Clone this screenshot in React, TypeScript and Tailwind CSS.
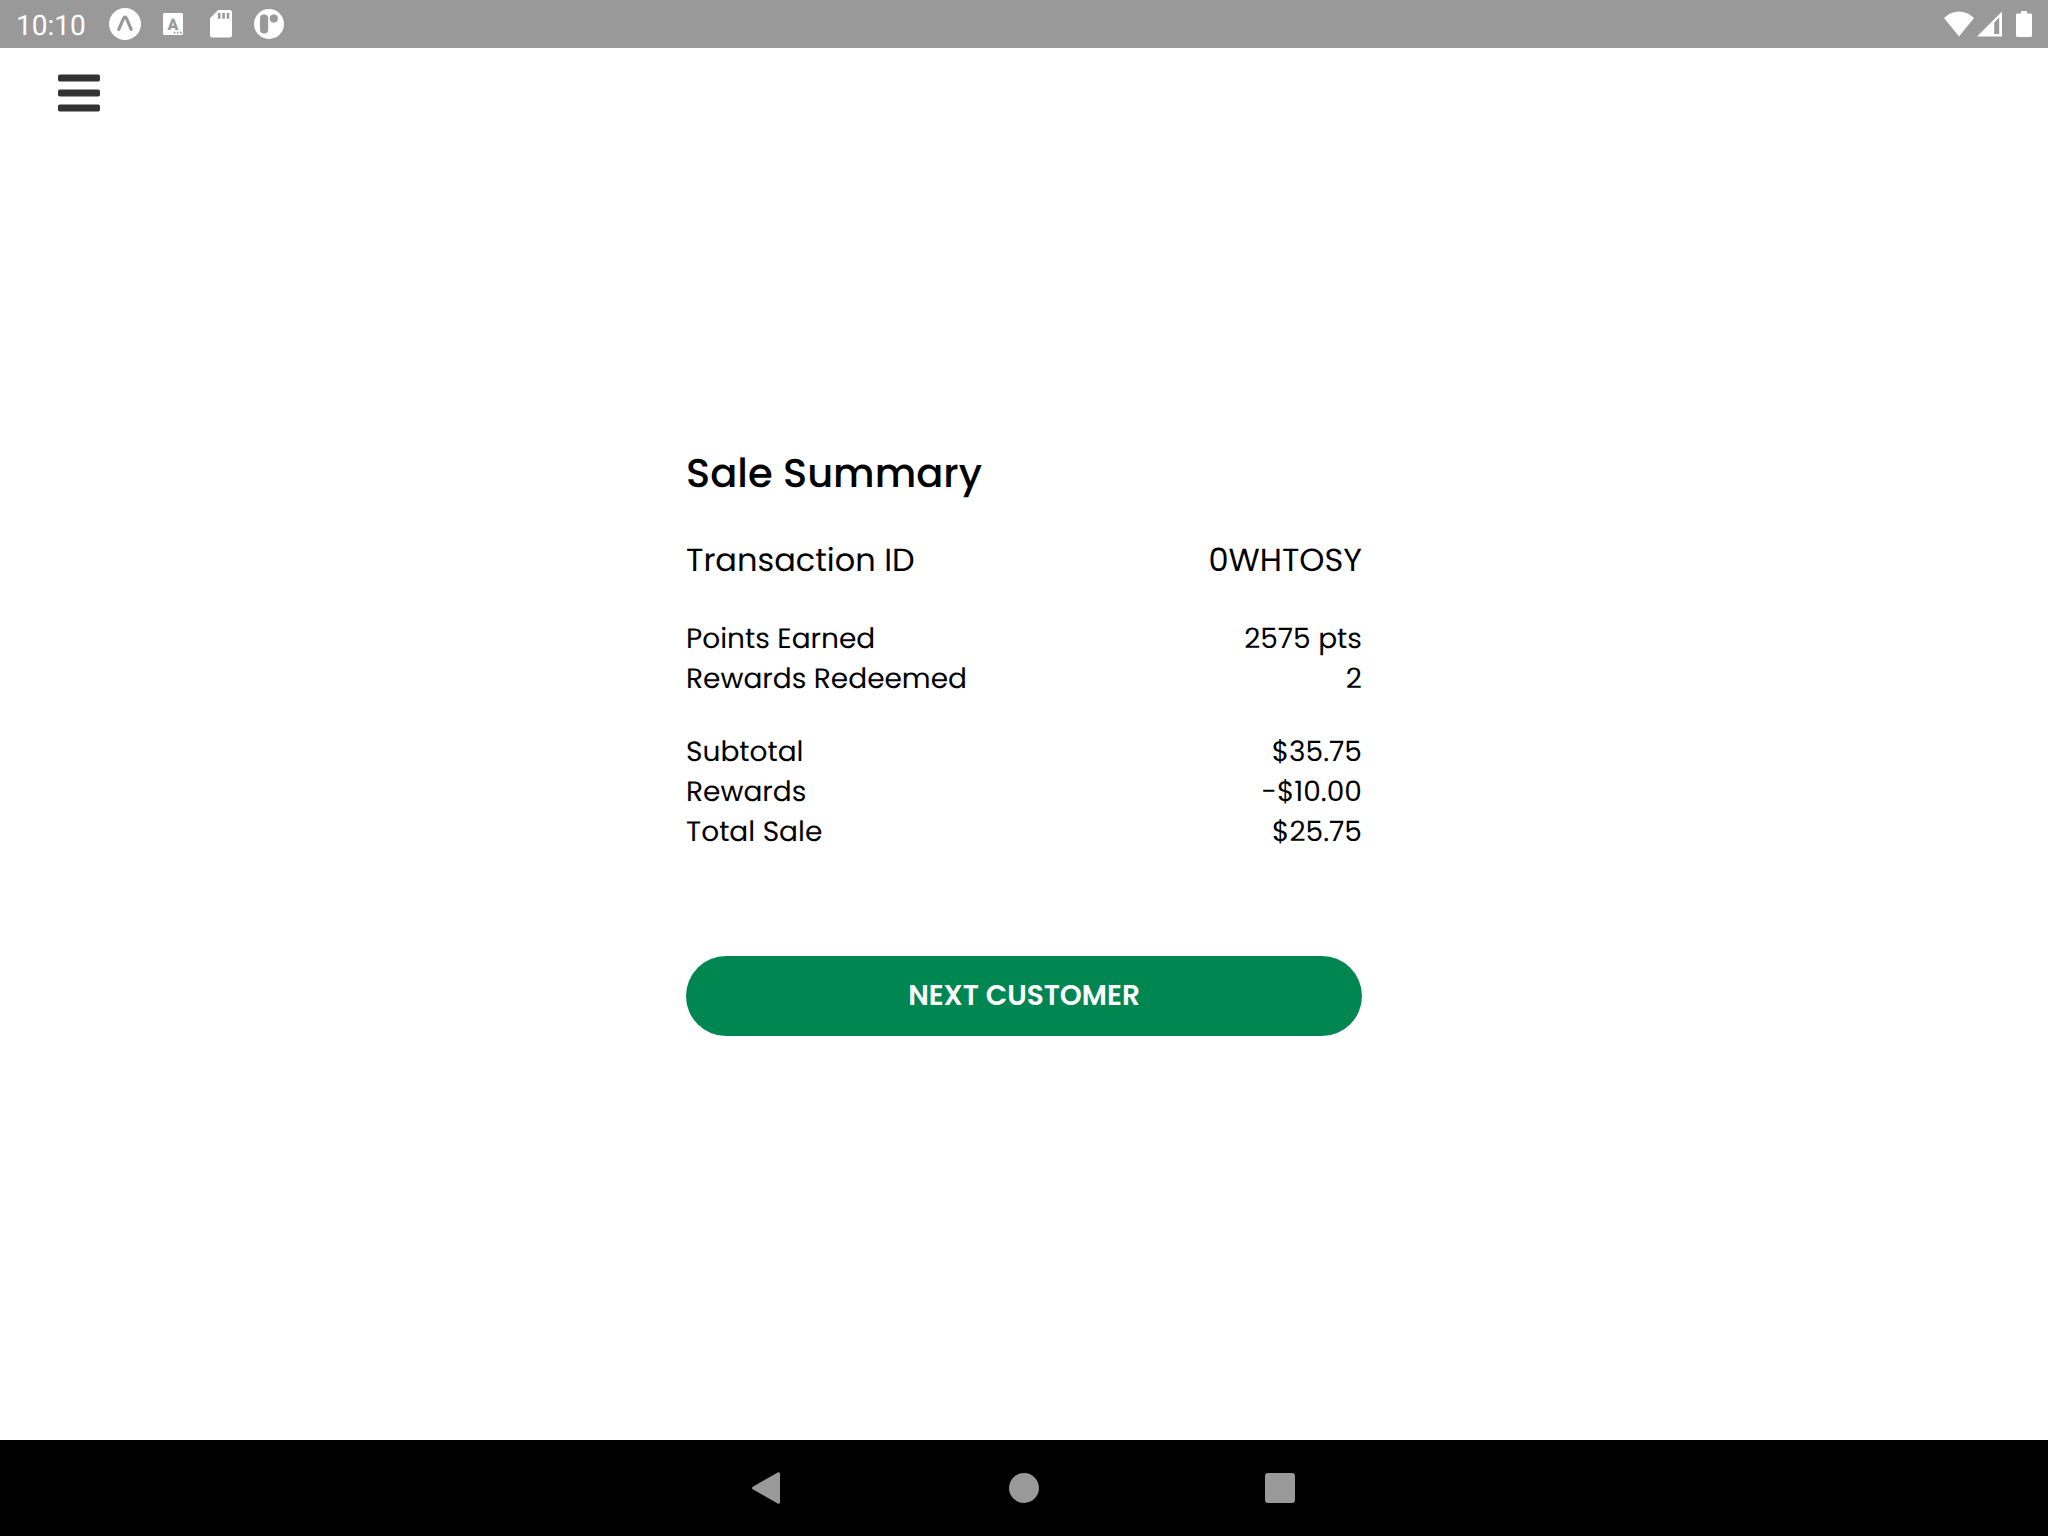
import React from "react";

type Row = { label: string; value: string };

const activity: Row[] = [
  { label: "Points Earned", value: "2575 pts" },
  { label: "Rewards Redeemed", value: "2" },
];

const totals: Row[] = [
  { label: "Subtotal", value: "$35.75" },
  { label: "Rewards", value: "-$10.00" },
  { label: "Total Sale", value: "$25.75" },
];

function StatusBar() {
  return (
    <div className="flex h-12 items-center bg-[#999999] pl-4 pr-4 text-white">
      <span className="w-[93px] pt-1 font-['Roboto',sans-serif] text-[28px] leading-8">10:10</span>
      <svg className="size-8" viewBox="0 0 32 32" aria-hidden="true">
        <circle cx="16" cy="16" r="16" fill="#fff" />
        <path d="M9.8 21.4 14.4 10.6Q16 7.4 17.6 10.6L22.2 21.4" fill="none" stroke="#999" strokeWidth="3.2" strokeLinecap="round" />
      </svg>
      <svg className="ml-[22px] h-[22px] w-5" viewBox="0 0 20 22" aria-hidden="true">
        <rect width="20" height="22" rx="1.2" fill="#fff" />
        <text x="10" y="17" textAnchor="middle" fill="#999" className="font-['Roboto',sans-serif] text-[16px] font-black">
          A
        </text>
        <path d="M10.6 19.6h1.8M13.8 19.6h1.8M17 19.6h1.8" stroke="#999" strokeWidth="1.8" />
      </svg>
      <svg className="ml-[27px] h-7 w-[22px]" viewBox="0 0 22 28" aria-hidden="true">
        <path d="M8.2 0H19.6Q22 0 22 2.4V25.2Q22 27.6 19.6 27.6H2.4Q0 27.6 0 25.2V8.2Z" fill="#fff" />
        <path d="M9.2 3v5.8M13.6 3v5.8M18 3v5.8" stroke="#999" strokeWidth="2.6" />
      </svg>
      <svg className="ml-[22px] size-[30px]" viewBox="0 0 30 30" aria-hidden="true">
        <circle cx="15" cy="15" r="15" fill="#fff" />
        <rect x="6" y="5.6" width="8.2" height="19" rx="4" fill="#999" />
        <circle cx="19.8" cy="9.6" r="4.1" fill="#999" />
      </svg>
      <svg className="ml-auto h-[26px] w-[30px]" viewBox="0 0 30 26" aria-hidden="true">
        <path d="M15 25.6 0 7Q6.500 .4 15 .4T30 7Z" fill="#fff" />
      </svg>
      <svg className="ml-[3px] h-[26px] w-[25px]" viewBox="0 0 25 26" aria-hidden="true">
        <path d="M25 .4V25.600H0Z" fill="#fff" />
        <path d="M17.200 11.800 22.200 6.200V23H17.200Z" fill="#999" />
      </svg>
      <svg className="ml-[14px] h-[26px] w-4" viewBox="0 0 16 26" aria-hidden="true">
        <path d="M5 0h6v2.600h3.600Q16 2.600 16 4V24.600Q16 26 14.600 26H1.400Q0 26 0 24.600V4Q0 2.600 1.400 2.600H5Z" fill="#fff" />
      </svg>
    </div>
  );
}

function Rows({ rows }: { rows: Row[] }) {
  return (
    <dl className="text-[28px] leading-10">
      {rows.map((row) => (
        <div key={row.label} className="flex justify-between">
          <dt>{row.label}</dt>
          <dd>{row.value}</dd>
        </div>
      ))}
    </dl>
  );
}

function NavigationBar() {
  return (
    <nav className="flex h-24 items-center justify-center bg-black">
      <button type="button" aria-label="Back" className="flex h-full w-64 items-center justify-center">
        <svg className="h-8 w-8" viewBox="0 0 32 32">
          <path d="M.8 14.700 25.600 .6Q28 -.4 28 2V30Q28 32.400 25.600 31.400L.8 17.300Q-.8 16 .8 14.700Z" fill="#999" />
        </svg>
      </button>
      <button type="button" aria-label="Home" className="flex h-full w-64 items-center justify-center">
        <span className="size-[30px] rounded-full bg-[#999999]" />
      </button>
      <button type="button" aria-label="Recent apps" className="flex h-full w-64 items-center justify-center">
        <span className="size-[30px] rounded-[3px] bg-[#999999]" />
      </button>
    </nav>
  );
}

export default function App() {
  return (
    <div className="flex min-h-screen flex-col bg-white font-['Poppins','Inter',sans-serif] text-black [text-rendering:geometricPrecision]">
      <StatusBar />
      <header className="flex h-[90px] items-center pl-[58px]">
        <button type="button" aria-label="Open menu">
          <svg className="h-[38px] w-[42px]" viewBox="0 0 42 38">
            <g fill="#333">
              <rect y="0.500" width="42" height="7" rx="1.800" />
              <rect y="15.500" width="42" height="7" rx="1.800" />
              <rect y="30.500" width="42" height="7" rx="1.800" />
            </g>
          </svg>
        </button>
      </header>
      <main className="flex flex-1 flex-col items-center justify-center pb-[89px]">
        <section className="w-[33%]">
          <h1 className="text-[40px] leading-10 font-medium">Sale Summary</h1>
          <dl className="mt-12 flex justify-between text-[32px] leading-10">
            <dt>Transaction ID</dt>
            <dd>0WHTOSY</dd>
          </dl>
          <div className="mt-[38px] flex flex-col gap-[33px]">
            <Rows rows={activity} />
            <Rows rows={totals} />
          </div>
          <button type="button" className="mt-[104px] h-20 w-full rounded-full bg-[#008651] text-[28px] leading-10 font-semibold text-white">
            NEXT CUSTOMER
          </button>
        </section>
      </main>
      <NavigationBar />
    </div>
  );
}
